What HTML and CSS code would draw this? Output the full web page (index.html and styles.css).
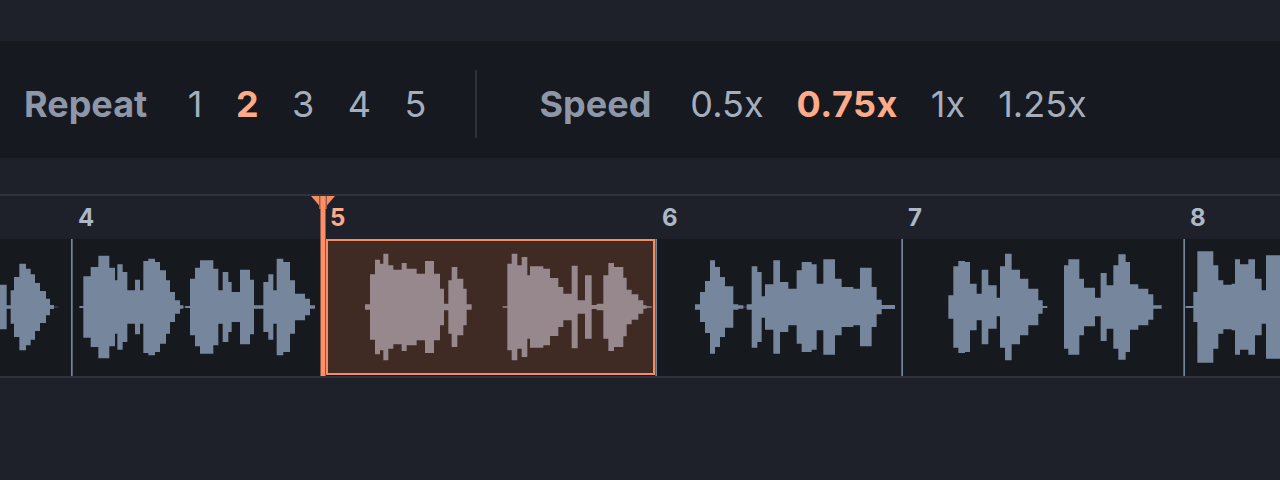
FILE: index.html
```html
<!DOCTYPE html>
<html lang="en">
<head>
<meta charset="utf-8">
<title>Loop player</title>
<link rel="stylesheet" href="styles.css">
</head>
<body>
<div class="toolbar">
  <div class="group repeat">
    <span class="label">Repeat</span>
    <span class="opt">1</span><span class="opt on">2</span><span class="opt">3</span><span class="opt">4</span><span class="opt">5</span>
  </div>
  <div class="divider"></div>
  <div class="group speed">
    <span class="label">Speed</span>
    <span class="opt">0.5x</span><span class="opt on">0.75x</span><span class="opt">1x</span><span class="opt">1.25x</span>
  </div>
</div>
<div class="timeline">
  <div class="ruler">
    <span class="bar bar4">4</span>
    <span class="bar bar5 on">5</span>
    <span class="bar bar6">6</span>
    <span class="bar bar7">7</span>
    <span class="bar bar8">8</span>
  </div>
  <div class="track">
  <svg class="wave" viewBox="0 -204 3840 411" preserveAspectRatio="none" aria-hidden="true">
    <defs>
      <path id="wave-main" d="M0 0V-67H20V-5H32V-50H42V-90H58V-130H78V-115H92V-98H105V-72H120V-48H138V-25H150V-6H162V-1H175V0Z
        M238 0V-3H250V-92H272V-120H295V-154H328V-118H345V-80H352V-128H368V-105H382V-50H405V-82H420V-50H430V-138H445V-145H465V-135H480V-110H498V-80H510V-45H525V-20H540V-5H550V-1H556V-3H570V-85H585V-118H600V-140H640V-115H655V-50H668V-105H685V-75H695V-45H720V-112H750V-82H762V-5H790V-75H805V-98H820V-50H830V-145H850V-135H870V-80H885V-40H915V-25H930V-5H945V0Z
        M2085 0V-8H2100V-45H2115V-78H2130V-140H2145V-120H2160V-90H2175V-62H2200V-8H2215V-5H2230V-1H2240V-8H2255V-122H2272V-105H2285V-32H2295V-68H2320V-140H2340V-75H2365V-55H2390V-110H2405V-135H2435V-128H2450V-70H2470V-143H2505V-85H2525V-60H2560V-55H2580V-118H2615V-60H2630V-22H2645V-6H2685V0Z
        M2845 0V-35H2860V-122H2875V-138H2895V-135H2910V-70H2930V-40H2945V-112H2965V-65H2990V-28H3000V-122H3015V-160H3035V-112H3060V-85H3085V-55H3115V-20H3128V-3H3142V0Z
        M3192 0V-125H3205V-143H3238V-85H3252V-58H3285V-28H3302V-102H3320V-65H3340V-125H3355V-158H3377V-135H3390V-68H3415V-55H3445V-38H3460V-5H3485V0Z
        M3557 0V-3H3580V-45H3592V-167H3640V-125H3655V-80H3670V-67H3695V-70H3705V-143H3720V-128H3745V-143H3765V-85H3785V-50H3798V-155H3840V0Z"/>
      <path id="wave-clip" d="M1095 0V-8H1110V-98H1125V-142H1140V-130H1150V-160H1165V-125H1180V-112H1205V-132H1220V-115H1250V-100H1275V-138H1302V-100H1320V-55H1332V-10H1345V-80H1355V-120H1372V-85H1390V-55H1400V-8H1415V0Z
        M1508 0V-2H1522V-130H1535V-160H1552V-125H1565V-150H1582V-95H1590V-122H1630V-115H1650V-87H1675V-60H1690V-40H1715V-124H1733V-20H1755V-95H1775V-6H1790V-10H1810V-95H1825V-132H1842V-120H1870V-88H1880V-52H1895V-38H1915V-20H1930V-5H1940V-2H1955V0Z"/>
    </defs>
    <rect class="clip-bg" x="981" y="-201" width="981" height="402"/>
    <use href="#wave-main" class="wf"/>
    <use href="#wave-main" class="wf" transform="scale(1,-1)"/>
    <use href="#wave-clip" class="wf-clip"/>
    <use href="#wave-clip" class="wf-clip" transform="scale(1,-1)"/>
    <rect class="tick" x="213" y="-204" width="5" height="411"/>
    <rect class="tick" x="1966" y="-204" width="5" height="411"/>
    <rect class="tick" x="2704" y="-204" width="5" height="411"/>
    <rect class="tick" x="3550" y="-204" width="5" height="411"/>
  </svg>
  </div>
  <svg class="playhead" viewBox="0 0 24 180" aria-hidden="true">
    <polygon class="ph-cap" points="0,0 24,0 12,14"/>
    <rect class="ph-gap" x="8" y="0" width="8" height="13"/>
    <rect class="ph-line" x="9.5" y="0" width="5" height="180"/>
  </svg>
</div>
</body>
</html>
```
FILE: styles.css
```css
* { box-sizing: border-box; }
html, body { margin: 0; height: 100%; }
body {
  width: 1280px;
  height: 480px;
  overflow: hidden;
  background: #1e212a;
  padding-top: 41px;
  font-family: Inter, "Liberation Sans", sans-serif;
}
.toolbar {
  height: 117px;
  background: #161920;
  display: flex;
  align-items: center;
  padding: 8px 0 0 24px;
}
.group {
  display: flex;
  align-items: center;
  font-size: 36px;
  line-height: 44px;
  white-space: nowrap;
}
.repeat { gap: 33.5px; }
.speed { gap: 33px; }
.label { font-weight: 700; color: #8e97a8; margin-right: 7px; }
.speed .label { margin-right: 6px; }
.opt { font-weight: 400; color: #a5aebd; }
.opt.on { font-weight: 700; color: #ffab8a; }
.speed .opt.on { letter-spacing: 0.5px; }
.divider {
  width: 2px;
  height: 68px;
  background: #2d313b;
  margin: 0 62px 0 49px;
}
.timeline {
  position: relative;
  margin-top: 36px;
  height: 184px;
  border-top: 2px solid #2e3340;
  border-bottom: 2px solid #2e3340;
  display: flex;
  flex-direction: column;
}
.ruler {
  height: 43px;
  display: flex;
  padding-left: 72px;
  font-size: 24px;
  font-weight: 700;
  line-height: 44px;
  color: #aeb7c5;
}
.bar { display: block; padding-left: 6px; }
.bar4 { width: 253px; }
.bar5 { width: 331px; padding-left: 5px; }
.bar6 { width: 246px; }
.bar7 { width: 282px; }
.bar8 { flex: 1; }
.bar.on { color: #ffab8a; }
.track { height: 137px; background: #16191e; }
.wave {
  display: block;
  width: 1280px;
  height: 137px;
  filter: blur(0.4px);
}
.wf { fill: #76869c; }
.wf-clip { fill: #96888c; }
.clip-bg { fill: #3f2a24; stroke: #f58c62; stroke-width: 6; }
.tick { fill: #76869c; }
.playhead {
  position: absolute;
  left: 311px;
  top: 0;
  width: 24px;
  height: 180px;
}
.ph-cap { fill: #f58c62; }
.ph-gap { fill: #9a5c44; }
.ph-line { fill: #ff8f66; }
```
